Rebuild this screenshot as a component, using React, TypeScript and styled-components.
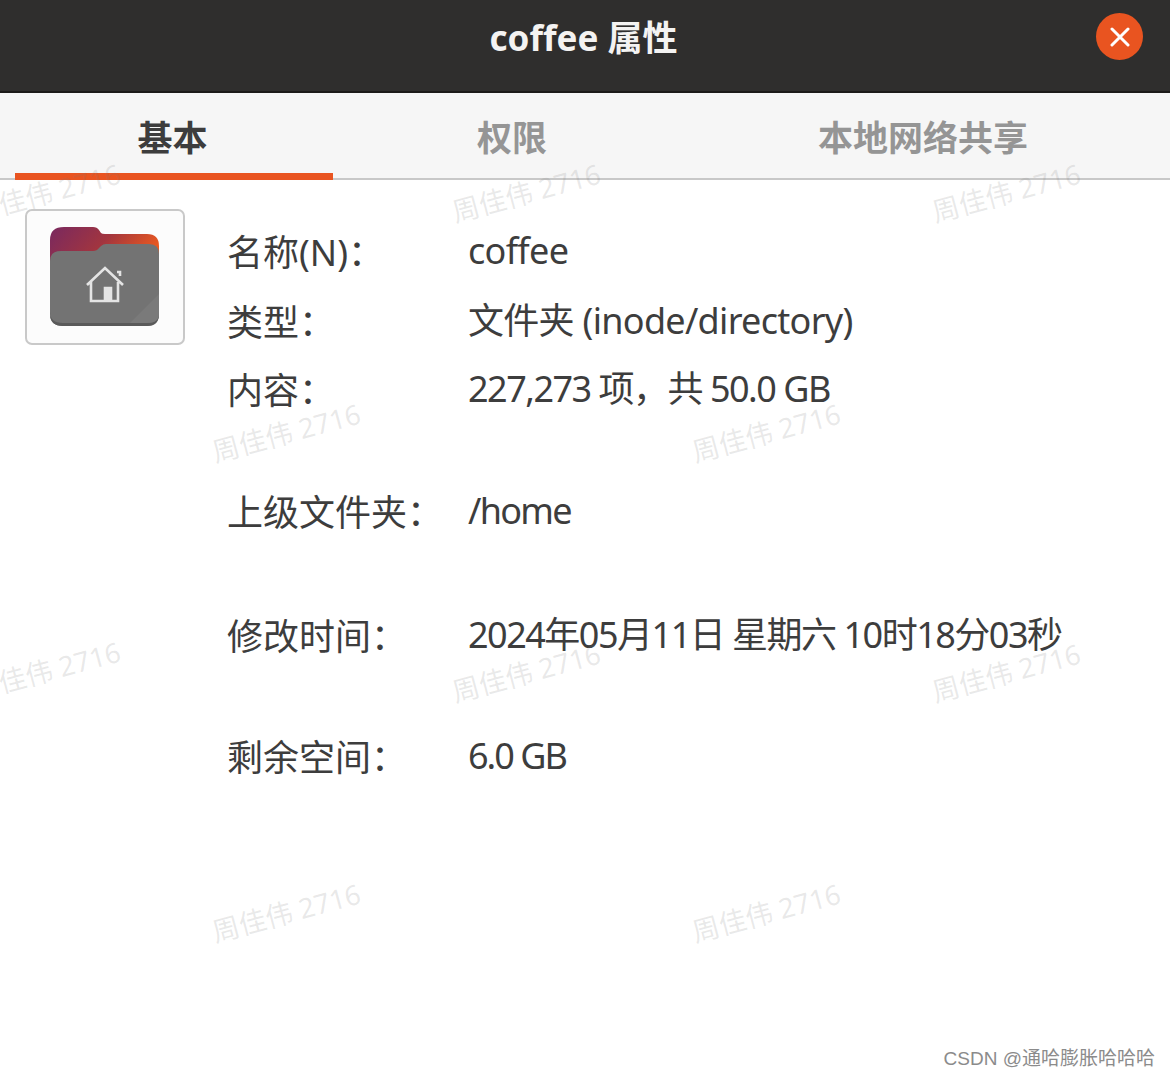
import React from 'react';
import styled, { createGlobalStyle } from 'styled-components';

const Global = createGlobalStyle`
  html, body { margin: 0; padding: 0; background: #fff; }
  body { font-family: "Noto Sans", "Noto Sans CJK SC", sans-serif; }
`;

const Window = styled.div`
  position: relative;
  width: 1170px;
  height: 1078px;
  overflow: hidden;
  background: #fff;
`;

const TitleBar = styled.div`
  height: 91px;
  background: #2f2e2d;
  border-bottom: 2px solid #1c1b1a;
  display: flex;
  align-items: center;
  justify-content: center;
  position: relative;
`;

const Title = styled.div`
  color: #f4f3f2;
  font-size: 35px;
  font-weight: 700;
  margin-top: -20px;
  margin-left: -3px;
`;

const CloseButton = styled.div`
  position: absolute;
  left: 1096px;
  top: 13px;
  width: 47px;
  height: 47px;
  border-radius: 50%;
  background: #e95420;
  display: flex;
  align-items: center;
  justify-content: center;
`;

const TabBar = styled.div`
  height: 85px;
  background: #f6f6f6;
  border-bottom: 2px solid #c8c8c8;
  padding: 0 15px;
  display: grid;
  grid-template-columns: 318px 358px 464px;
`;

const Tab = styled.div<{ $active?: boolean }>`
  display: flex;
  align-items: center;
  justify-content: center;
  height: 87px;
  box-sizing: border-box;
  padding: 4px ${p => (p.$active ? 3 : 0)}px 0 0;
  font-size: 35px;
  font-weight: 700;
  color: ${p => (p.$active ? '#3d3d3d' : '#959595')};
  border-bottom: 7px solid ${p => (p.$active ? '#e95420' : 'transparent')};
`;

const Body = styled.div`
  display: flex;
  align-items: flex-start;
  padding: 29px 0 0 25px;
`;

const IconFrame = styled.div`
  width: 160px;
  height: 136px;
  box-sizing: border-box;
  border: 2px solid #c9c9c9;
  border-radius: 7px;
  background: #fcfcfc;
  display: flex;
  align-items: center;
  justify-content: center;
  flex: none;
`;

const Fields = styled.div`
  margin-left: 42px;
  margin-top: 18px;
`;

const Row = styled.div<{ $top?: number }>`
  display: grid;
  grid-template-columns: 241px 1fr;
  height: 48px;
  line-height: 48px;
  margin-top: ${p => p.$top ?? 0}px;
  font-size: 36px;
  color: #3d3d3d;
  white-space: nowrap;
`;

const Label = styled.span`
  margin-top: 2px;
`;

const Value = styled.span<{ $track: number }>`
  letter-spacing: ${p => p.$track}px;
`;

const Mark = styled.div<{ $x: number; $y: number }>`
  position: absolute;
  left: ${p => p.$x}px;
  top: ${p => p.$y}px;
  font-size: 27.5px;
  line-height: 40px;
  color: rgba(120, 120, 120, 0.17);
  transform: rotate(-15deg);
  white-space: nowrap;
  pointer-events: none;
`;

const Credit = styled.div`
  position: absolute;
  right: 15px;
  top: 1046px;
  font-family: "Liberation Sans", "Noto Sans CJK SC", sans-serif;
  font-size: 19px;
  line-height: 26px;
  color: #8b8b8b;
`;

const marks: [number, number][] = [
  [-30, 173],
  [450, 173],
  [930, 173],
  [210, 413],
  [690, 413],
  [-30, 651],
  [450, 653],
  [930, 653],
  [210, 893],
  [690, 893],
];

const FolderIcon = () => (
  <svg width="110" height="102" viewBox="0 0 110 102">
    <defs>
      <linearGradient id="tabGrad" x1="0" y1="0.2" x2="1" y2="0.5">
        <stop offset="0" stopColor="#7d2a5c" />
        <stop offset="0.5" stopColor="#a2353f" />
        <stop offset="1" stopColor="#ec5a1f" />
      </linearGradient>
    </defs>
    <path
      d="M0 14 Q0 1 14 1 H43 Q47 1 49 4 L51 7 Q52 8 55 8 H97 Q109 8 109 20 V40 H0 Z"
      fill="url(#tabGrad)"
    />
    <path
      d="M0 35 Q0 25 11 25 H43 Q47 25 49 22 L51 20 Q53 18 56 18 H99 Q109 18 109 28 V88 Q109 100 97 100 H13 Q0 100 0 88 Z"
      fill="#737373"
    />
    <path d="M0 86 V88 Q0 100 13 100 H97 Q109 100 109 88 V86 Q109 97 97 97 H13 Q0 97 0 86 Z" fill="#5a5a5a" />
    <path d="M109 68 V88 Q109 97 97 97 H80 Z" fill="#7a7a7a" />
    <path
      d="M37 59 L55 42 L73 59 M41 56 V75 H68 V56 M55 75 V62 H61 V75 M67 46 L70 46 L70 50"
      fill="none"
      stroke="#e4e4e4"
      strokeWidth="2.6"
    />
    <path d="M55 62 H61 V75 H55 Z" fill="#e4e4e4" />
  </svg>
);

export default function App() {
  return (
    <Window>
      <Global />
      <TitleBar>
        <Title>coffee 属性</Title>
        <CloseButton>
          <svg width="20" height="20" viewBox="0 0 20 20">
            <path d="M2 2 L18 18 M18 2 L2 18" stroke="#fff" strokeWidth="3" strokeLinecap="round" />
          </svg>
        </CloseButton>
      </TitleBar>
      <TabBar>
        <Tab $active>基本</Tab>
        <Tab>权限</Tab>
        <Tab>本地网络共享</Tab>
      </TabBar>
      <Body>
        <IconFrame>
          <FolderIcon />
        </IconFrame>
        <Fields>
          <Row>
            <Label>名称(N)：</Label>
            <Value $track={-0.7}>coffee</Value>
          </Row>
          <Row $top={22}>
            <Label>类型：</Label>
            <Value $track={-0.7}>文件夹 (inode/directory)</Value>
          </Row>
          <Row $top={20}>
            <Label>内容：</Label>
            <Value $track={-1.5}>227,273 项，共 50.0 GB</Value>
          </Row>
          <Row $top={74}>
            <Label>上级文件夹：</Label>
            <Value $track={-1.7}>/home</Value>
          </Row>
          <Row $top={76}>
            <Label>修改时间：</Label>
            <Value $track={-1.5}>2024年05月11日 星期六 10时18分03秒</Value>
          </Row>
          <Row $top={73}>
            <Label>剩余空间：</Label>
            <Value $track={-2}>6.0 GB</Value>
          </Row>
        </Fields>
      </Body>
      {marks.map(([x, y]) => (
        <Mark key={`${x}-${y}`} $x={x} $y={y}>
          周佳伟 2716
        </Mark>
      ))}
      <Credit>CSDN @通哈膨胀哈哈哈</Credit>
    </Window>
  );
}
